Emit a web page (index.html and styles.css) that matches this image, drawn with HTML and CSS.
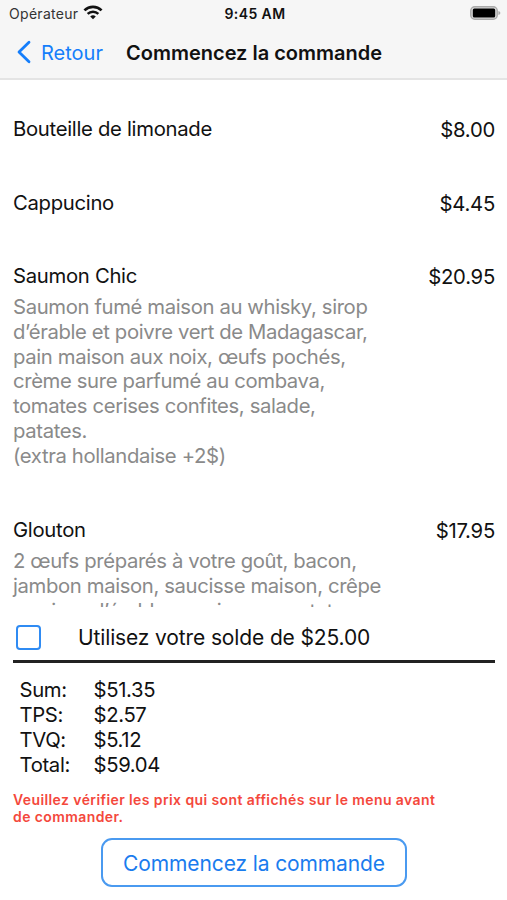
FILE: index.html
```html
<!DOCTYPE html>
<html lang="fr">
<head>
  <meta charset="UTF-8">
  <meta name="viewport" content="width=device-width, initial-scale=1.0">
  <title>Commencez la commande</title>
  <link rel="stylesheet" href="styles.css">
</head>
<body>
  <header class="top">
    <div class="status-bar">
      <div class="carrier">
        <span>Opérateur</span>
        <svg class="wifi" viewBox="0 0 18 14" width="20" height="15">
          <path d="M1 5 A11.5 11.5 0 0 1 17 5" fill="none" stroke="#111" stroke-width="2.5"/>
          <path d="M4 8.3 A7.2 7.2 0 0 1 14 8.3" fill="none" stroke="#111" stroke-width="2.3"/>
          <path d="M6.4 10.7 A3.8 3.8 0 0 1 11.6 10.7 L9 13.4 Z" fill="#111"/>
        </svg>
      </div>
      <div class="clock">9:45 AM</div>
      <svg class="battery" viewBox="0 0 31 14" width="31" height="14">
        <rect x="0.8" y="0.8" width="26.4" height="12.4" rx="4" fill="#ddd" stroke="#aaa" stroke-width="1.5"/>
        <rect x="2.8" y="2.5" width="22.4" height="9" rx="1.5" fill="#000"/>
        <path d="M28.4 5 Q30.4 5.6 30.4 7 Q30.4 8.4 28.4 9 Z" fill="#aaa"/>
      </svg>
    </div>
    <nav class="nav-bar">
      <a class="back" href="#">
        <svg viewBox="0 0 16 26" width="16" height="26">
          <path d="M13 3.3 L3 13 L13 22.7" fill="none" stroke="#157efb" stroke-width="2.8" stroke-linecap="round" stroke-linejoin="round"/>
        </svg>
        <span>Retour</span>
      </a>
      <h1>Commencez la commande</h1>
    </nav>
  </header>

  <main class="order">
    <div class="item">
      <h2>Bouteille de limonade</h2>
      <span class="price">$8.00</span>
    </div>
    <div class="item">
      <h2>Cappucino</h2>
      <span class="price">$4.45</span>
    </div>
    <div class="item">
      <h2>Saumon Chic</h2>
      <span class="price">$20.95</span>
      <p>
        Saumon fumé maison au whisky, sirop<br>
        d’érable et poivre vert de Madagascar,<br>
        pain maison aux noix, œufs pochés,<br>
        crème sure parfumé au combava,<br>
        tomates cerises confites, salade,<br>
        patates.<br>
        (extra hollandaise +2$)
      </p>
    </div>
    <div class="item">
      <h2>Glouton</h2>
      <span class="price">$17.95</span>
      <p>
        2 œufs préparés à votre goût, bacon,<br>
        jambon maison, saucisse maison, crêpe<br>
        au sirop d’érable, servis avec patates
      </p>
    </div>
  </main>

  <footer class="summary">
    <label class="balance">
      <input type="checkbox">
      <span>Utilisez votre solde de $25.00</span>
    </label>
    <dl class="totals">
      <dt>Sum:</dt><dd>$51.35</dd>
      <dt>TPS:</dt><dd>$2.57</dd>
      <dt>TVQ:</dt><dd>$5.12</dd>
      <dt>Total:</dt><dd>$59.04</dd>
    </dl>
    <p class="warning">Veuillez vérifier les prix qui sont affichés sur le menu avant<br>de commander.</p>
    <button class="submit">Commencez la commande</button>
  </footer>
</body>
</html>
```
FILE: styles.css
```css
* {
  box-sizing: border-box;
}
body {
  margin: 0;
  height: 900px;
  display: flex;
  flex-direction: column;
  overflow: hidden;
  background: #fff;
  color: #111;
  font-family: Inter, "Liberation Sans", sans-serif;
  font-size: 20px;
}
h1, h2, p, dl, dd {
  margin: 0;
}
.top {
  flex: none;
  height: 80px;
  background: #f6f6f6;
  border-bottom: 2px solid #e4e4e4;
}
.status-bar {
  display: grid;
  grid-template-columns: 1fr auto 1fr;
  align-items: center;
  height: 27px;
  padding: 0 6px 0 9px;
  font-size: 14px;
}
.carrier {
  display: flex;
  align-items: center;
  gap: 5px;
  color: #333;
  letter-spacing: 0.3px;
}
.wifi {
  margin-top: -2px;
}
.clock {
  font-weight: 600;
  letter-spacing: 0.4px;
}
.battery {
  justify-self: end;
  margin-top: -1px;
}
.nav-bar {
  display: flex;
  align-items: center;
  height: 50px;
  padding: 1px 0 0 16px;
}
.back {
  display: flex;
  align-items: center;
  gap: 9px;
  width: 110px;
  color: #157efb;
  text-decoration: none;
}
.back svg {
  margin-top: -1px;
}
.nav-bar h1 {
  font-size: 20px;
  font-weight: 600;
  white-space: nowrap;
}
.order {
  flex: none;
  height: 527px;
  padding: 36px 12px 0 13px;
  overflow: hidden;
}
.item {
  display: grid;
  grid-template-columns: 1fr auto;
  margin-bottom: 48.5px;
  line-height: 25px;
}
.item h2 {
  font-size: 20.3px;
  font-weight: 400;
  letter-spacing: -0.3px;
}
.price {
  padding-top: 1px;
  height: 25px;
  font-size: 20.3px;
  letter-spacing: -0.25px;
}
.item p {
  grid-column: 1 / 3;
  margin-top: 7px;
  line-height: 24.8px;
  font-size: 20.3px;
  letter-spacing: -0.37px;
  color: #8a8a8a;
  white-space: nowrap;
}
.summary {
  flex: 1;
  padding: 0 12px 0 13px;
}
.balance {
  display: flex;
  align-items: center;
  height: 56px;
  padding: 7px 0 0 3px;
  border-bottom: 3px solid #222;
  font-size: 21px;
  letter-spacing: -0.13px;
}
.balance input {
  appearance: none;
  width: 25px;
  height: 25px;
  margin: 0 37px 0 0;
  border: 2px solid #2f8bf3;
  border-radius: 4px;
}
.totals {
  display: grid;
  grid-template-columns: 74px auto;
  padding: 15.4px 0 0 6.5px;
  line-height: 24.75px;
  font-size: 20.3px;
  letter-spacing: -0.35px;
}
.warning {
  margin-top: 13.6px;
  color: #f4483c;
  font-size: 14px;
  font-weight: 600;
  line-height: 17px;
  letter-spacing: 0.4px;
}
.submit {
  display: block;
  width: 306px;
  height: 49px;
  margin: 13px 0 0 88px;
  padding: 2px 0 0;
  border: 2px solid #4a9af0;
  border-radius: 11px;
  background: #fff;
  color: #1a7cee;
  font: 21px Inter, sans-serif;
  letter-spacing: -0.12px;
}
```
